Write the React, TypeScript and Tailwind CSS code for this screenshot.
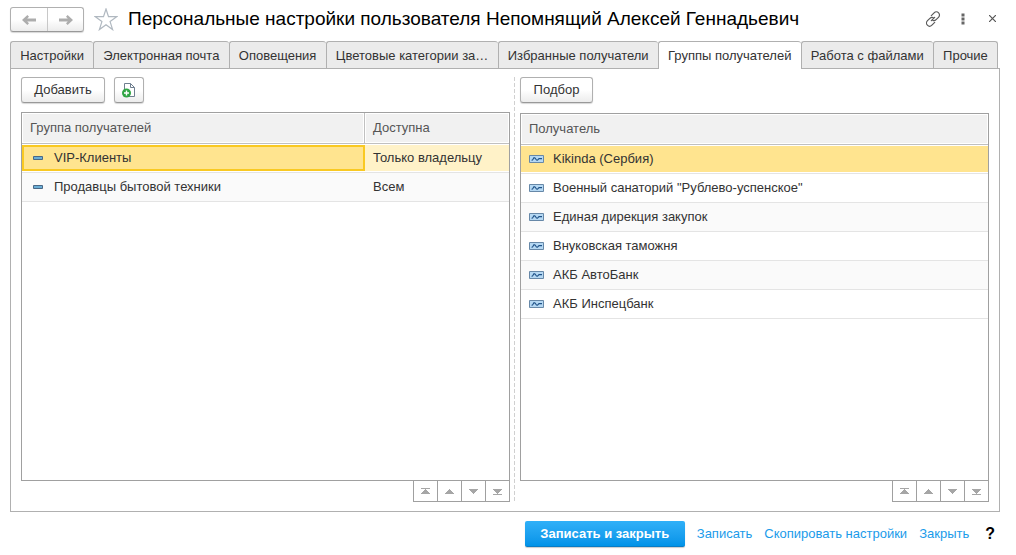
import { useState } from 'react';
import type { ReactNode } from 'react';

const tabs = [
  'Настройки',
  'Электронная почта',
  'Оповещения',
  'Цветовые категории за…',
  'Избранные получатели',
  'Группы получателей',
  'Работа с файлами',
  'Прочие'
];

const groups = [
  { name: 'VIP-Клиенты', access: 'Только владельцу' },
  { name: 'Продавцы бытовой техники', access: 'Всем' }
];

const recipients = [
  'Kikinda (Сербия)',
  'Военный санаторий "Рублево-успенское"',
  'Единая дирекция закупок',
  'Внуковская таможня',
  'АКБ АвтоБанк',
  'АКБ Инспецбанк'
];

const pagerButtons = [
  { label: 'В начало', path: 'M0 0h9v1H0zM4 1h1v1h1v1h1v1h1v1h1v1H0V5h1V4h1V3h1V2h1z' },
  { label: 'Вверх', path: 'M4 1h1v1h1v1h1v1h1v1h1v1H0V5h1V4h1V3h1V2h1z' },
  { label: 'Вниз', path: 'M0 1h9v1H8v1H7v1H6v1H5v1H4V5H3V4H2V3H1V2H0z' },
  { label: 'В конец', path: 'M0 1h9v1H8v1H7v1H6v1H5v1h4v1H0V6h4V5H3V4H2V3H1V2H0z' }
];

const Arrow = ({ flip = false }: { flip?: boolean }) => (
  <svg width="14" height="10" viewBox="0 0 14 10" className={flip ? 'rotate-180' : ''} aria-hidden="true">
    <path d="M14 3.500v3H5.200L7 8.300 5.400 10 0 5l5.400-5L7 1.700 5.200 3.500z" fill="#adadad" />
  </svg>
);

const Star = () => (
  <svg width="24" height="23" viewBox="0 0 24 23" aria-hidden="true">
    <path
      d="M12 1l2.500 7.700h8.200l-6.600 4.900 2.500 8-6.600-4.900-6.600 4.900 2.500-8L1.300 8.700h8.200z"
      fill="#fff"
      stroke="#b0b8c0"
      strokeWidth="1.200"
    />
  </svg>
);

const LinkIcon = () => (
  <svg width="16" height="16" viewBox="0 0 16 16" fill="none" stroke="#5a5a5a" strokeWidth="1.200" strokeLinecap="round" aria-hidden="true">
    <path d="M6.300 4.700l2.800-2.800c1.300-1.300 3.300-1.300 4.500-.1s1.200 3.200-.1 4.500l-2.400 2.400c-1 1-2.300 1.200-3.300.7" />
    <path d="M9.700 11.300l-2.800 2.800c-1.300 1.300-3.300 1.300-4.500.1s-1.200-3.200.1-4.500l2.400-2.400c1-1 2.300-1.200 3.300-.7" />
    <path d="M6.300 9.700l3.400-3.400" />
  </svg>
);

const NewGroupIcon = () => (
  <svg width="16" height="16" viewBox="0 0 16 16" aria-hidden="true">
    <path d="M3.500 8V1.500h6l4 4v9H8" fill="#fff" stroke="#6f7f8f" />
    <path d="M9.500 1.500v4h4" fill="none" stroke="#6f7f8f" />
    <circle cx="5.500" cy="11" r="4.500" fill="#2fa543" />
    <path d="M5.500 8.500v5M3 11h5" stroke="#fff" strokeWidth="1.400" />
  </svg>
);

const GroupIcon = () => (
  <svg width="10" height="5" viewBox="0 0 10 5" aria-hidden="true">
    <path d="M.5.5h9v3h-9z" fill="#6aaed6" stroke="#4a6886" />
  </svg>
);

const RecipientIcon = () => (
  <svg width="15" height="8" viewBox="0 0 15 8" aria-hidden="true">
    <path d="M.5.5h14v7H.5z" fill="#b5d8f3" stroke="#6788a8" />
    <path d="M2.500 5.300l1-.3 1.500-2.300 1 .2L7.500 5l1 .2L10 3.600h3" fill="none" stroke="#1f5288" strokeWidth="1.100" />
  </svg>
);

const ToolButton = ({ children, label, className }: { children: ReactNode; label?: string; className: string }) => (
  <button
    aria-label={label}
    className={`flex h-[26px] items-center justify-center rounded-[3px] border border-[#b0b0b0] border-b-[#999] bg-linear-to-b from-white from-50% to-[#ececec] shadow-[0_1px_1px_#d8d8d8] ${className}`}
  >
    {children}
  </button>
);

const HeadCell = ({ children, className = '' }: { children: ReactNode; className?: string }) => (
  <th className={`border-b border-[#c0c0c0] p-px text-left font-normal ${className}`}>
    <div className="h-7 truncate bg-[#f1f1f1] px-[7px] leading-7 text-[#555]">{children}</div>
  </th>
);

const Pager = () => (
  <div className="flex justify-end">
    {pagerButtons.map((button) => (
      <button
        key={button.label}
        aria-label={button.label}
        className="flex h-[21px] w-6 items-center justify-center border-b border-l border-[#a0a0a0] last:w-[25px] last:border-r"
      >
        <svg width="9" height="7" viewBox="0 0 9 7" aria-hidden="true">
          <path d={button.path} fill="#a6a6a6" />
        </svg>
      </button>
    ))}
  </div>
);

const GroupsPane = () => (
  <section className="flex grow-[489] basis-0 flex-col">
    <div className="flex gap-[9px]">
      <ToolButton className="w-[84px]">Добавить</ToolButton>
      <ToolButton label="Создать группу" className="w-[30px]">
        <NewGroupIcon />
      </ToolButton>
    </div>
    <div className="mt-[9px] grow border border-[#a0a0a0]">
      <table className="w-full table-fixed border-separate border-spacing-0">
        <thead>
          <tr>
            <HeadCell className="w-[343px] border-r">Группа получателей</HeadCell>
            <HeadCell>Доступна</HeadCell>
          </tr>
        </thead>
        <tbody>
          {groups.map((group, i) => (
            <tr key={group.name} className={i === 0 ? '' : 'bg-[#fafafa]'}>
              <td className="border-b border-[#e4e4e4] py-px">
                <div
                  className={`flex h-[26px] items-center gap-[11px] border-2 pl-[9px] ${
                    i === 0 ? 'border-[#f9c922] bg-[#ffe48f]' : 'border-transparent'
                  }`}
                >
                  <GroupIcon />
                  {group.name}
                </div>
              </td>
              <td className="border-b border-[#e4e4e4] py-px">
                <div className={`h-[26px] px-2 leading-[26px] ${i === 0 ? 'bg-[#fff2c8]' : ''}`}>{group.access}</div>
              </td>
            </tr>
          ))}
        </tbody>
      </table>
    </div>
    <Pager />
  </section>
);

const RecipientsPane = () => (
  <section className="flex grow-[469] basis-0 flex-col">
    <div className="flex">
      <ToolButton className="w-[73px]">Подбор</ToolButton>
    </div>
    <div className="mt-[10px] grow border border-[#a0a0a0]">
      <table className="w-full table-fixed border-separate border-spacing-0">
        <thead>
          <tr>
            <HeadCell>Получатель</HeadCell>
          </tr>
        </thead>
        <tbody>
          {recipients.map((name, i) => (
            <tr key={name} className={i > 0 && i % 2 === 0 ? 'bg-[#fafafa]' : ''}>
              <td className="border-b border-[#e4e4e4] py-px">
                <div className={`flex h-[26px] items-center gap-[9px] px-2 ${i === 0 ? 'bg-[#ffe48f]' : ''}`}>
                  <RecipientIcon />
                  {name}
                </div>
              </td>
            </tr>
          ))}
        </tbody>
      </table>
    </div>
    <Pager />
  </section>
);

const App = () => {
  const [active, setActive] = useState('Группы получателей');

  return (
    <main className="flex min-h-screen flex-col bg-white pr-4 pb-2 pl-[10px] font-['Liberation_Sans',Arial,sans-serif] text-[13px] text-[#333]">
      <header className="flex h-[41px] items-center pb-[2px]">
        <div className="flex h-[25px] rounded-[3px] border border-[#b0b0b0] border-b-[#999] bg-linear-to-b from-white from-50% to-[#ececec] shadow-[0_1px_1px_#d8d8d8]">
          <button aria-label="Назад" className="flex w-[37px] items-center justify-center border-r border-[#c8c8c8]">
            <Arrow />
          </button>
          <button aria-label="Вперед" className="flex w-[35px] items-center justify-center">
            <Arrow flip />
          </button>
        </div>
        <button aria-label="В избранное" className="ml-[10px]">
          <Star />
        </button>
        <h1 className="ml-[10px] grow truncate text-[19px] text-black">
          Персональные настройки пользователя Непомнящий Алексей Геннадьевич
        </h1>
        <div className="flex items-center gap-5 pb-[2px]">
          <button aria-label="Ссылка">
            <LinkIcon />
          </button>
          <button aria-label="Еще">
            <svg width="4" height="12" viewBox="0 0 4 12" fill="#666" aria-hidden="true">
              <path d="M.5.5h3v3h-3zM.5 4.500h3v3h-3zM.5 8.500h3v3h-3z" />
            </svg>
          </button>
          <button aria-label="Закрыть окно" className="mr-1 ml-1">
            <svg width="7" height="7" viewBox="0 0 7 7" aria-hidden="true">
              <path d="M0 0l7 7M7 0L0 7" stroke="#555" strokeWidth="1.200" />
            </svg>
          </button>
        </div>
      </header>

      <nav className="mr-[2px] flex" role="tablist">
        {tabs.map((tab) => (
          <button
            key={tab}
            role="tab"
            aria-selected={active === tab}
            onClick={() => setActive(tab)}
            className={`h-7 flex-auto truncate rounded-t-[3px] border-t border-l border-[#b0b0b0] px-2 last:border-r ${
              active === tab ? 'relative z-10 bg-white' : 'bg-[#ebebeb]'
            }`}
          >
            {tab}
          </button>
        ))}
      </nav>

      <div className="-mt-px flex grow border border-[#b0b0b0] px-[10px] pt-2 pb-[9px]">
        <GroupsPane />
        <div className="mr-[5px] ml-1 w-px bg-[repeating-linear-gradient(to_bottom,#d0d0d0_0_4px,transparent_4px_6px)]" />
        <RecipientsPane />
      </div>

      <footer className="mt-[9px] flex items-center justify-end gap-3 pr-[5px] text-[#1a9bea]">
        <button className="h-[26px] w-40 rounded-[2px] border-b border-[#0a7cc4] bg-linear-to-b from-[#2fb0f8] to-[#0093e8] font-bold text-white shadow-[0_1px_1px_#ccc]">
          Записать и закрыть
        </button>
        <button>Записать</button>
        <button>Скопировать настройки</button>
        <button>Закрыть</button>
        <button className="ml-1 text-base font-bold text-black">?</button>
      </footer>
    </main>
  );
};

export default App;
